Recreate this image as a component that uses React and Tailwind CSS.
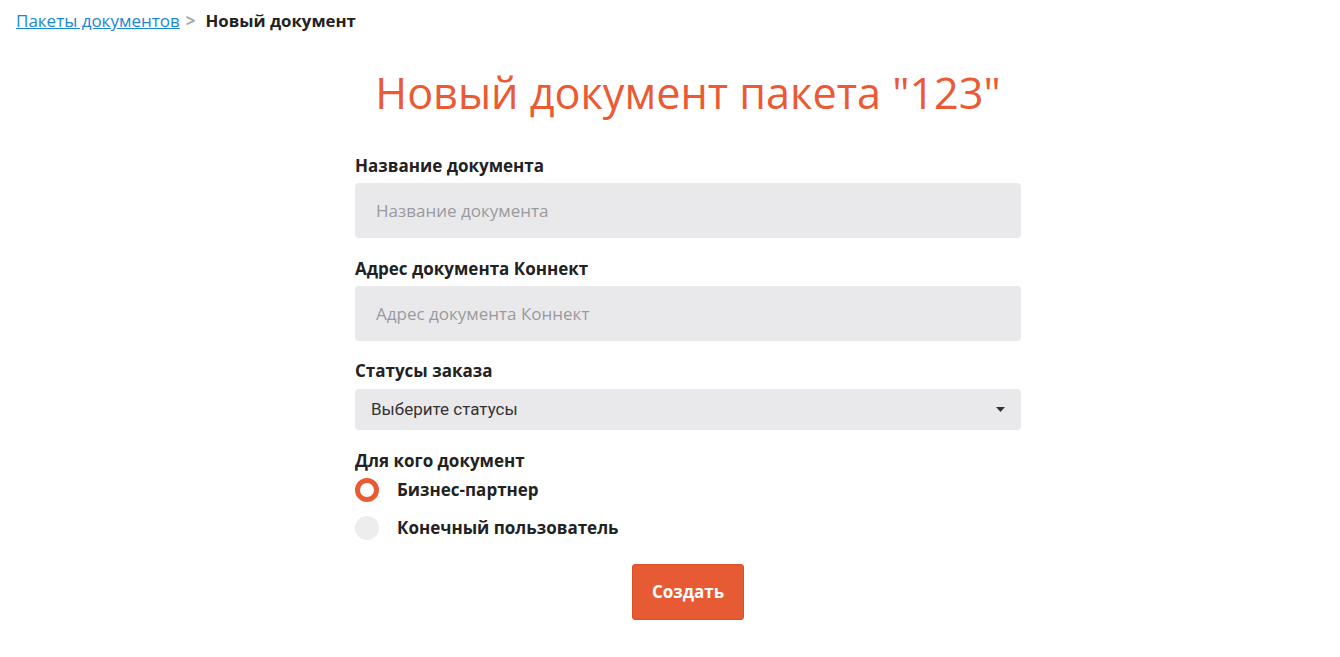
import React from "react";

export default function App() {
  return (
    <div className="min-h-[657px] bg-white text-[#222] font-['Open_Sans',sans-serif]">
      <div className="flex items-center px-4 pt-[9px] text-[17px] leading-[23px]">
        <a href="#" className="text-[#1a87d3] underline">Пакеты документов</a>
        <span className="ml-[6px] text-[#aaa] font-bold">&gt;</span>
        <span className="ml-[10px] font-bold text-[#222] text-[16.8px]">Новый документ</span>
      </div>
      <div className="ml-[355px] w-[666px] flex flex-col">
        <h1 className="mt-[31px] text-center text-[43.2px] leading-[60px] text-[#ea5a34] font-normal">
          Новый документ пакета "123"
        </h1>
        <label className="mt-[31px] text-[17px] font-bold leading-[23px]">Название документа</label>
        <div className="mt-[6px] h-[55px] rounded bg-[#e9e9eb] flex items-center pl-[21px] text-[17px] text-[#9a9a9e]">
          Название документа
        </div>
        <label className="mt-[19px] text-[17px] font-bold leading-[23px]">Адрес документа Коннект</label>
        <div className="mt-[6px] h-[55px] rounded bg-[#e9e9eb] flex items-center pl-[21px] text-[17px] text-[#9a9a9e]">
          Адрес документа Коннект
        </div>
        <label className="mt-[18px] text-[17px] font-bold leading-[23px]">Статусы заказа</label>
        <div className="mt-[7px] h-[41px] rounded bg-[#e9e9eb] flex items-center justify-between pl-[16px] pr-[16px] text-[17px] text-[#333] font-['Roboto',sans-serif]">
          <span>Выберите статусы</span>
          <svg width="9" height="5" viewBox="0 0 9 5"><path d="M0 0h9L4.5 5z" fill="#333" /></svg>
        </div>
        <label className="mt-[19px] text-[17px] font-bold leading-[23px]">Для кого документ</label>
        <div className="mt-[6px] flex items-center gap-[18px] h-[24px]">
          <span className="w-[24px] h-[24px] rounded-full border-[5px] border-[#e85b33] bg-white"></span>
          <span className="text-[17px] font-bold">Бизнес-партнер</span>
        </div>
        <div className="mt-[14px] flex items-center gap-[18px] h-[24px]">
          <span className="w-[24px] h-[24px] rounded-full bg-[#ededed]"></span>
          <span className="text-[17px] font-bold">Конечный пользователь</span>
        </div>
        <div className="mt-[24px] flex justify-center">
          <button className="w-[112px] h-[56px] rounded-[3px] bg-[#e65b34] border border-[#d94e28] text-white text-[17px] font-bold">
            Создать
          </button>
        </div>
      </div>
    </div>
  );
}
